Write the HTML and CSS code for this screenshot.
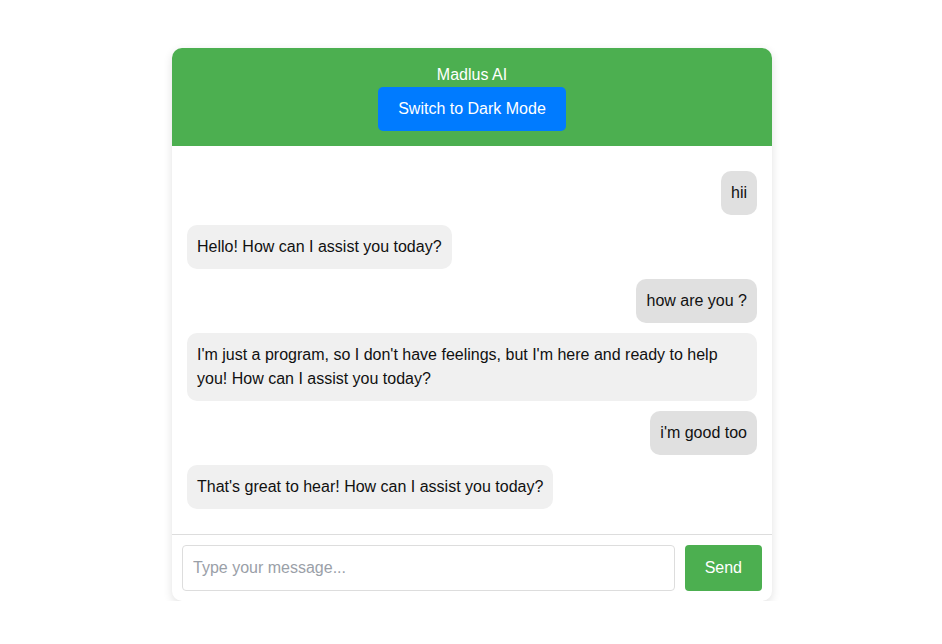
FILE: index.html
```html
<!DOCTYPE html>
<html lang="en">
<head>
<meta charset="utf-8">
<title>Madlus AI</title>
<link rel="stylesheet" href="styles.css">
</head>
<body>
<div class="chat">
  <header class="chat-header">
    <div class="chat-title">Madlus AI</div>
    <button class="mode-btn" type="button">Switch to Dark Mode</button>
  </header>
  <main class="messages">
    <div class="msg user">hii</div>
    <div class="msg bot">Hello! How can I assist you today?</div>
    <div class="msg user">how are you ?</div>
    <div class="msg bot">I'm just a program, so I don't have feelings, but I'm here and ready to help you! How can I assist you today?</div>
    <div class="msg user">i'm good too</div>
    <div class="msg bot">That's great to hear! How can I assist you today?</div>
  </main>
  <footer class="composer">
    <input class="composer-input" type="text" placeholder="Type your message...">
    <button class="send-btn" type="button">Send</button>
  </footer>
</div>
</body>
</html>
```

FILE: styles.css
```css
* { box-sizing: border-box; }

body {
  margin: 0;
  padding: 48px 0 0 2px;
  background: #ffffff;
  font-family: "Liberation Sans", Arial, sans-serif;
  font-size: 16px;
  color: #111;
}

.chat {
  width: 600px;
  margin: 0 auto;
  background: #fff;
  border-radius: 10px;
  box-shadow: 0 3px 10px rgba(0, 0, 0, 0.12);
  overflow: hidden;
  display: flex;
  flex-direction: column;
}

.chat-header {
  background: #4caf50;
  color: #fff;
  padding: 18px 15px 15px;
  display: flex;
  flex-direction: column;
  align-items: center;
  gap: 3px;
}

.chat-title {
  font-size: 16px;
  line-height: 18px;
}

.mode-btn {
  font-family: inherit;
  font-size: 16px;
  color: #fff;
  background: #007bff;
  border: none;
  border-radius: 5px;
  height: 44px;
  padding: 0 20px;
}

.messages {
  display: flex;
  flex-direction: column;
  gap: 10px;
  padding: 25px 15px;
}

.msg {
  padding: 10px;
  line-height: 24px;
  border-radius: 10px;
  max-width: 100%;
}

.msg.user {
  align-self: flex-end;
  background: #e0e0e0;
}

.msg.bot {
  align-self: flex-start;
  background: #f0f0f0;
}

.composer {
  border-top: 1px solid #ddd;
  padding: 10px;
  display: flex;
  gap: 10px;
}

.composer-input {
  flex: 1;
  height: 46px;
  border: 1px solid #ddd;
  border-radius: 4px;
  padding: 0 10px;
  font-family: inherit;
  font-size: 16px;
  color: #111;
}

.composer-input::placeholder {
  color: #9aa0a8;
}

.send-btn {
  height: 46px;
  padding: 0 20px;
  background: #4caf50;
  color: #fff;
  border: none;
  border-radius: 4px;
  font-family: inherit;
  font-size: 16px;
}
```
